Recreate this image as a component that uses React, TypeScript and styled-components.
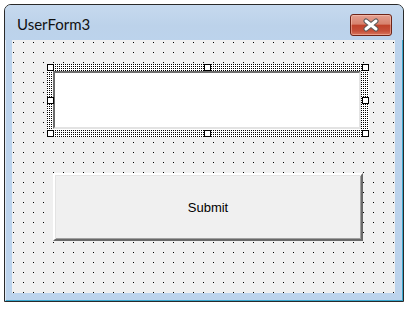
import styled, { createGlobalStyle } from 'styled-components';

const GlobalStyle = createGlobalStyle`
  html, body {
    margin: 0;
    padding: 0;
    background: #ffffff;
  }
  body {
    font-family: "Liberation Sans", Arial, sans-serif;
  }
`;

const Page = styled.div`
  padding: 4px 0 0 4px;
`;

const Window = styled.div`
  width: 400px;
  height: 298px;
  box-sizing: border-box;
  display: flex;
  flex-direction: column;
  border: 1px solid #2a2a2a;
  border-radius: 7px 7px 0 0;
  background: #bcd3ec;
  box-shadow: inset 1px 1px 0 rgba(255, 255, 255, 0.55), inset -1px -1px 0 #3ba8cf;
  padding: 0 8px 8px 7px;
`;

const TitleBar = styled.div`
  height: 35px;
  flex: none;
  display: flex;
  justify-content: space-between;
  align-items: flex-start;
  margin: 0 -8px 0 -7px;
  padding: 0 11px 0 12px;
  border-radius: 6px 6px 0 0;
  background: linear-gradient(#c6d9ee, #bcd2ea 60%, #bcd3ec);
`;

const Title = styled.span`
  margin-top: 10px;
  font-family: "Lato", "Liberation Sans", sans-serif;
  font-size: 15px;
  color: #111111;
`;

const CloseButton = styled.div`
  margin-top: 9px;
  width: 42px;
  height: 22px;
  box-sizing: border-box;
  border: 1px solid #6e2417;
  border-radius: 3px;
  display: flex;
  align-items: center;
  justify-content: center;
  background: linear-gradient(#e4a090 0%, #d7826e 45%, #c0432b 52%, #c5503a 80%, #d8765f 100%);
  box-shadow: inset 0 0 0 1px rgba(255, 210, 195, 0.45);
`;

const Client = styled.div`
  flex: 1;
  display: flex;
  flex-direction: column;
  align-items: flex-start;
  padding: 24px 0 0 35px;
  background-color: #f0f0f0;
  background-image: conic-gradient(at 1px 1px, transparent 0 270deg, #000 0);
  background-size: 10px 10px;
  background-position: 1px 2px;
`;

const SelectionFrame = styled.div`
  position: relative;
  width: 322px;
  height: 73px;
  box-sizing: border-box;
  padding: 7px 8px 8px 6px;
  background-color: #ffffff;
  background-image: conic-gradient(at 1px 1px, transparent 0 270deg, #000 0);
  background-size: 2px 2px;
`;

const TextBox = styled.div`
  width: 100%;
  height: 100%;
  box-sizing: border-box;
  background: #ffffff;
  border-top: 2px solid #6d6d6d;
  border-left: 2px solid #6d6d6d;
  border-bottom: 2px solid #e3e3e3;
  border-right: 2px solid #e3e3e3;
`;

const Handle = styled.span<{ $x: 'left' | 'center' | 'right'; $y: 'top' | 'middle' | 'bottom' }>`
  position: absolute;
  width: 7px;
  height: 7px;
  box-sizing: border-box;
  border: 1px solid #000;
  background: #ffffff;
  left: ${(p) => (p.$x === 'left' ? '0' : p.$x === 'center' ? '157px' : 'auto')};
  right: ${(p) => (p.$x === 'right' ? '0' : 'auto')};
  top: ${(p) => (p.$y === 'top' ? '0' : p.$y === 'middle' ? '33px' : 'auto')};
  bottom: ${(p) => (p.$y === 'bottom' ? '0' : 'auto')};
`;

const SubmitButton = styled.button`
  margin: 36px 0 0 6px;
  width: 310px;
  height: 68px;
  box-sizing: border-box;
  background: #f0f0f0;
  border-top: 2px solid #ffffff;
  border-left: 2px solid #ffffff;
  border-bottom: 2px solid #696969;
  border-right: 2px solid #696969;
  box-shadow: inset 1px 1px 0 #e3e3e3, inset -1px -1px 0 #a0a0a0;
  font-family: "Liberation Sans", Arial, sans-serif;
  font-size: 13px;
  color: #000;
  padding: 0;
`;

const handles: Array<['left' | 'center' | 'right', 'top' | 'middle' | 'bottom']> = [
  ['left', 'top'],
  ['center', 'top'],
  ['right', 'top'],
  ['left', 'middle'],
  ['right', 'middle'],
  ['left', 'bottom'],
  ['center', 'bottom'],
  ['right', 'bottom'],
];

function CloseGlyph() {
  return (
    <svg width="18" height="14" viewBox="0 0 18 14">
      <path d="M4 3 L14 11 M14 3 L4 11" stroke="#5a5a5a" strokeWidth="5" strokeLinecap="round" fill="none" />
      <path d="M4 3 L14 11 M14 3 L4 11" stroke="#ffffff" strokeWidth="3" strokeLinecap="round" fill="none" />
    </svg>
  );
}

export default function App() {
  return (
    <>
      <GlobalStyle />
      <Page>
        <Window>
          <TitleBar>
            <Title>UserForm3</Title>
            <CloseButton>
              <CloseGlyph />
            </CloseButton>
          </TitleBar>
          <Client>
            <SelectionFrame>
              <TextBox />
              {handles.map(([x, y]) => (
                <Handle key={x + y} $x={x} $y={y} />
              ))}
            </SelectionFrame>
            <SubmitButton>Submit</SubmitButton>
          </Client>
        </Window>
      </Page>
    </>
  );
}
